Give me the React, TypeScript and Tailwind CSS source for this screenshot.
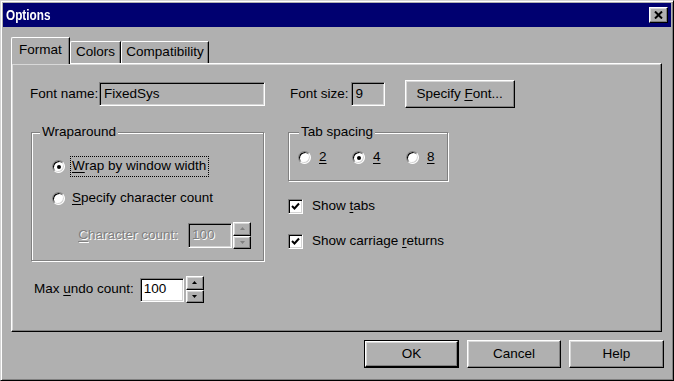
import React from "react";

const raised =
  "border border-t-white border-l-white border-r-black border-b-black shadow-[inset_-1px_-1px_0_#808080,inset_1px_1px_0_#d8d8d8]";
const sunken =
  "border border-t-[#808080] border-l-[#808080] border-r-white border-b-white shadow-[inset_1px_1px_0_#000,inset_-1px_-1px_0_#d4d4d4]";
const etched = "border border-[#808080] shadow-[1px_1px_0_#fff,inset_1px_1px_0_#fff]";
const disabledText = "text-[#808080] [text-shadow:1px_1px_0_#fff]";

const Radio = ({ checked = false }: { checked?: boolean }) => (
  <span
    className={`relative flex items-center justify-center w-[13px] h-[13px] shrink-0 rounded-full bg-white ${sunken}`}
  >
    {checked && <span className="w-[4px] h-[4px] rounded-full bg-black" />}
  </span>
);

const Checkbox = () => (
  <span className={`flex items-center justify-center w-[15px] h-[15px] shrink-0 bg-white ${sunken}`}>
    <svg width="9" height="9" viewBox="0 0 9 9">
      <path d="M1 4 L3.5 6.5 L8 1.5" stroke="#000" strokeWidth="2" fill="none" />
    </svg>
  </span>
);

const Spinner = ({ disabled = false }: { disabled?: boolean }) => {
  const c = disabled ? "#808080" : "#000";
  return (
    <div className="flex flex-col w-[18px] h-[27px]">
      <div className={`flex-1 flex items-center justify-center bg-[#b0b0b0] ${raised}`}>
        <svg width="5" height="3" viewBox="0 0 5 3">
          <path d="M2.5 0 L5 3 L0 3 Z" fill={c} />
        </svg>
      </div>
      <div className={`flex-1 flex items-center justify-center bg-[#b0b0b0] ${raised}`}>
        <svg width="5" height="3" viewBox="0 0 5 3">
          <path d="M0 0 L5 0 L2.5 3 Z" fill={c} />
        </svg>
      </div>
    </div>
  );
};

const GroupLabel = ({ children, left }: { children: React.ReactNode; left: string }) => (
  <span className={`absolute -top-[9px] ${left} px-[2px] bg-[#b0b0b0] leading-[16px]`}>{children}</span>
);

const Button = ({ children, isDefault = false, className = "" }: { children: React.ReactNode; isDefault?: boolean; className?: string }) => (
  <div className={`${isDefault ? "border border-black" : ""} ${className}`}>
    <div className={`w-full h-full flex items-center justify-center bg-[#b0b0b0] ${raised}`}>{children}</div>
  </div>
);

const App = () => {
  return (
    <div className="w-[674px] h-[381px] font-['Liberation_Sans',Arial,sans-serif] text-[13.5px] text-black">
      <div className="w-full h-full flex flex-col p-[2px] bg-[#b0b0b0] border border-t-[#d4d4d4] border-l-[#d4d4d4] border-r-black border-b-black shadow-[inset_1px_1px_0_#fff,inset_-1px_-1px_0_#808080]">
        {/* title bar */}
        <div className="flex items-center h-[24px] px-[3px] bg-[#000070]">
          <span className="inline-block origin-left scale-x-[0.84] text-white font-bold text-[14px]">Options</span>
          <div className={`ml-auto w-[19px] h-[16px] ${raised} bg-[#b0b0b0] flex items-center justify-center`}>
            <svg width="9" height="8" viewBox="0 0 9 8">
              <path d="M1 0.5 L8 7.5 M8 0.5 L1 7.5" stroke="#000" strokeWidth="2" />
            </svg>
          </div>
        </div>

        {/* tabs */}
        <div className="flex items-end h-[26px] mt-[10px] ml-[8px]">
          <div className="relative z-10 -mb-px w-[59px] h-[27px] pb-[2px] flex items-center justify-center bg-[#b0b0b0] border-t border-l border-white border-r border-r-black rounded-tl-[2px] shadow-[inset_-1px_0_0_#808080]">
            Format
          </div>
          <div className="w-[51px] h-[22px] flex items-center justify-center border-t border-l border-white border-r border-r-black rounded-tl-[2px] shadow-[inset_-1px_0_0_#808080]">
            Colors
          </div>
          <div className="w-[88px] h-[22px] flex items-center justify-center border-t border-l border-white border-r border-r-black rounded-tl-[2px] shadow-[inset_-1px_0_0_#808080]">
            Compatibility
          </div>
        </div>

        {/* panel */}
        <div className={`ml-[8px] w-[651px] h-[269px] flex pt-[18px] pl-[18px] ${raised}`}>
          {/* left column */}
          <div className="flex flex-col w-[235px]">
            <div className="flex items-center justify-between h-[24px]">
              <span>Font name:</span>
              <div className={`w-[166px] h-[24px] flex items-center pl-[4px] ${sunken}`}>FixedSys</div>
            </div>

            <div className={`relative mt-[26px] ml-px w-[233px] h-[129px] flex flex-col ${etched}`}>
              <GroupLabel left="left-[8px]">Wraparound</GroupLabel>
              <div className="flex items-center h-[21px] mt-[23px] pl-[20px]">
                <Radio checked />
                <span className="ml-[5px] h-[21px] w-[139px] overflow-hidden whitespace-nowrap flex items-center px-[2px] outline outline-1 outline-dotted outline-black -outline-offset-1">
                  <u className="underline-offset-2">W</u>rap by window width
                </span>
              </div>
              <div className="flex items-center h-[21px] mt-[11px] pl-[20px]">
                <Radio />
                <span className="ml-[7px]">
                  <u className="underline-offset-2">S</u>pecify character count
                </span>
              </div>
              <div className="flex items-center justify-end mt-[13px] pr-[12px]">
                <span className={`mr-[10px] ${disabledText}`}>
                  <u className="underline-offset-2">C</u>haracter count:
                </span>
                <div className={`w-[44px] h-[25px] flex items-center pl-[3px] ${sunken} ${disabledText}`}>100</div>
                <div className="ml-px">
                  <Spinner disabled />
                </div>
              </div>
            </div>

            <div className="flex items-center mt-[15px] ml-[4px]">
              <span>
                Max <u className="underline-offset-2">u</u>ndo count:
              </span>
              <div className={`ml-[6px] w-[44px] h-[24px] flex items-center pl-[3px] bg-white ${sunken}`}>100</div>
              <div className="ml-[2px]">
                <Spinner />
              </div>
            </div>
          </div>

          {/* right column */}
          <div className="flex flex-col ml-[23px]">
            <div className="flex items-center h-[24px] pl-[2px]">
              <span>Font size:</span>
              <div className={`ml-[2px] w-[34px] h-[24px] flex items-center pl-[4px] ${sunken}`}>9</div>
              <Button className="ml-[20px] -my-[2px] w-[110px] h-[28px]">
                <span>
                  Specify <u className="underline-offset-2">F</u>ont...
                </span>
              </Button>
            </div>

            <div className={`relative mt-[26px] w-[160px] h-[49px] flex ${etched}`}>
              <GroupLabel left="left-[10px]">Tab spacing</GroupLabel>
              <div className="flex items-center h-[21px] mt-[14px] pl-[9px]">
                {["2", "4", "8"].map((n) => (
                  <div key={n} className="flex items-center w-[54px]">
                    <Radio checked={n === "4"} />
                    <u className="ml-[8px] underline-offset-2">{n}</u>
                  </div>
                ))}
              </div>
            </div>

            <div className="flex items-center h-[16px] mt-[17px]">
              <Checkbox />
              <span className="ml-[9px]">
                Show <u className="underline-offset-2">t</u>abs
              </span>
            </div>
            <div className="flex items-center h-[16px] mt-[19px]">
              <Checkbox />
              <span className="ml-[9px]">
                Show carriage <u className="underline-offset-2">r</u>eturns
              </span>
            </div>
          </div>
        </div>

        {/* buttons */}
        <div className="flex justify-end gap-[8px] mt-[8px] pr-[7px]">
          <Button isDefault className="w-[95px] h-[28px]">
            OK
          </Button>
          <Button className="w-[94px] h-[28px]">Cancel</Button>
          <Button className="w-[95px] h-[28px]">Help</Button>
        </div>
      </div>
    </div>
  );
};

export default App;
